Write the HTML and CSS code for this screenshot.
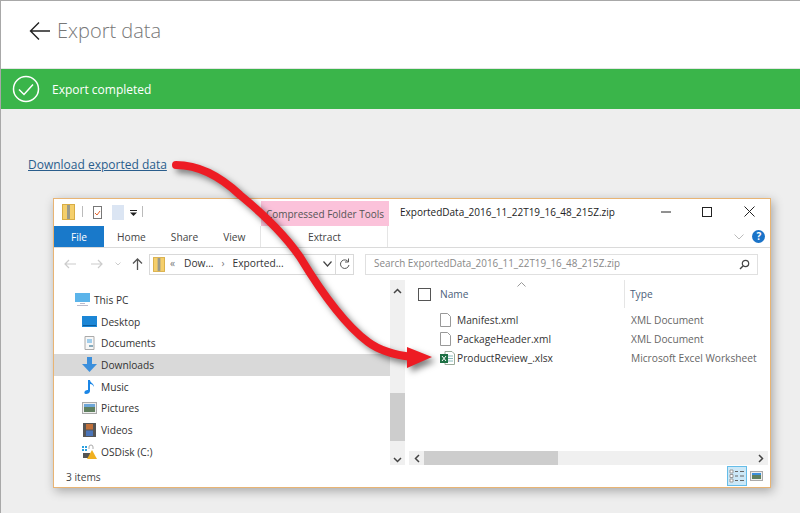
FILE: index.html
```html
<!DOCTYPE html>
<html lang="en">
<head>
<meta charset="utf-8">
<title>Export data</title>
<link rel="stylesheet" href="styles.css">
</head>
<body>
<div class="page">
  <header class="head">
    <svg class="back" width="22" height="20" viewBox="0 0 22 20"><path d="M21 10H2M10 1.500 1.500 10l8.500 8.500" fill="none" stroke="#222" stroke-width="1.400"/></svg>
    <h1 class="title">Export data</h1>
  </header>
  <div class="banner">
    <svg width="28" height="28" viewBox="0 0 28 28"><circle cx="14" cy="14" r="12.500" fill="none" stroke="#fff" stroke-width="1.500"/><path d="M7 14.500l5 5 9-10" fill="none" stroke="#fff" stroke-width="1.500"/></svg>
    <span class="banner-text">Export completed</span>
  </div>
  <main class="body">
    <a class="dl" href="#">Download exported data</a>
    <section class="win">
      <div class="titlebar">
        <div class="qat">
          <svg width="13" height="16" viewBox="0 0 13 16"><rect x=".5" y=".5" width="12" height="15" fill="#f5cf6b" stroke="#d8ad45"/><rect x="5" y="1" width="3" height="14" fill="#9a9a8a"/></svg>
          <i class="vsep"></i>
          <svg class="q2" width="9" height="14" viewBox="0 0 9 14"><rect x=".5" y="1.500" width="8" height="12" fill="#fff" stroke="#777"/><path d="M2 8l2 2 3-4" fill="none" stroke="#e2622b"/></svg>
          <svg class="q3" width="12" height="15" viewBox="0 0 12 15"><path d="M0 0h12v15H0z" fill="#dbe5f3"/></svg>
          <svg class="q4" width="7" height="6" viewBox="0 0 7 6"><path d="M0 0h7v1H0zM0 2.500h7L3.500 6z" fill="#222"/></svg>
          <i class="vsep s2"></i>
        </div>
        <div class="ctx">Compressed Folder Tools</div>
        <div class="wintitle">ExportedData_2016_11_22T19_16_48_215Z.zip</div>
        <div class="ctrls">
          <svg width="12" height="12" viewBox="0 0 12 12"><path d="M1 6h10" stroke="#222"/></svg>
          <svg class="max" width="10" height="10" viewBox="0 0 10 10"><rect x=".5" y=".5" width="9" height="9" fill="none" stroke="#222"/></svg>
          <svg class="close" width="11" height="11" viewBox="0 0 11 11"><path d="M.5.500l10 10M10.500.500l-10 10" stroke="#222"/></svg>
        </div>
      </div>
      <nav class="tabs">
        <span class="file">File</span>
        <span class="tab home">Home</span>
        <span class="tab share">Share</span>
        <span class="tab view">View</span>
        <span class="tab extract">Extract</span>
        <svg class="ribchev" width="10" height="6" viewBox="0 0 10 6"><path d="M.5.500 5 5 9.500.500" fill="none" stroke="#bbb"/></svg>
        <span class="help">?</span>
      </nav>
      <div class="addr">
        <svg class="nav n1" width="12" height="10" viewBox="0 0 12 10"><path d="M12 5H1M5 1 1 5l4 4" fill="none" stroke="#ccc" stroke-width="1.200"/></svg>
        <svg class="nav n2" width="12" height="10" viewBox="0 0 12 10"><path d="M0 5h11M7 1l4 4-4 4" fill="none" stroke="#ccc" stroke-width="1.200"/></svg>
        <svg class="nav n3" width="6" height="4" viewBox="0 0 6 4"><path d="M.5.500 3 3 5.500.500" fill="none" stroke="#ccc"/></svg>
        <svg class="nav n4" width="11" height="12" viewBox="0 0 11 12"><path d="M5.500 12V1M1 5.500 5.500 1 10 5.500" fill="none" stroke="#555" stroke-width="1.300"/></svg>
        <div class="pathbox">
          <svg class="zip" width="12" height="15" viewBox="0 0 13 16"><rect x=".5" y=".5" width="12" height="15" fill="#f5cf6b" stroke="#d8ad45"/><rect x="5" y="1" width="3" height="14" fill="#9a9a8a"/></svg>
          <span class="crumb c0">«</span><span class="crumb c2">Dow...</span><span class="crumb c1">›</span><span class="crumb c3">Exported...</span>
          <svg class="pdrop" width="9" height="6" viewBox="0 0 9 6"><path d="M.5.500 4.500 5 8.500.500" fill="none" stroke="#444" stroke-width="1.200"/></svg>
          <span class="refresh"><svg width="11" height="12" viewBox="0 0 11 12"><path d="M9.500 4A4.300 4.300 0 1 0 10 7M9.500 .5V4H6" fill="none" stroke="#555"/></svg></span>
        </div>
        <div class="searchbox">
          <span class="search-text">Search ExportedData_2016_11_22T19_16_48_215Z.zip</span>
          <svg width="11" height="11" viewBox="0 0 11 11"><circle cx="6.500" cy="4.500" r="3.200" fill="none" stroke="#444" stroke-width="1.200"/><path d="M4 7 1 10" stroke="#444" stroke-width="1.500"/></svg>
        </div>
      </div>
      <div class="content">
        <ul class="tree">
          <li class="node pc"><svg width="15" height="13" viewBox="0 0 15 13"><rect width="15" height="9" fill="#5bb4ea"/><path d="M5 10h5v1H5zM2 12h11v1H2z" fill="#bbc"/></svg>This PC</li>
          <li class="node"><svg width="15" height="11" viewBox="0 0 15 11"><rect width="15" height="11" fill="#1b86d6"/><rect x="1" y="9" width="13" height="1" fill="#0b5c9c"/></svg>Desktop</li>
          <li class="node"><svg width="15" height="14" viewBox="0 0 15 14"><path d="M3 .5h9v13H3z" fill="#f7f7f7" stroke="#aaa"/><path d="M5 4h5M5 6h5" stroke="#4aa3df"/><path d="M7 9h4v2H7z" fill="#8ab"/></svg>Documents</li>
          <li class="node on"><svg width="15" height="15" viewBox="0 0 15 15"><path d="M5 0h5v7h5l-7.500 8L0 7h5z" fill="#3b8fdc"/></svg>Downloads</li>
          <li class="node"><svg width="15" height="15" viewBox="0 0 15 15"><path d="M6 1h2c0 3 4 3 4 7-1-2-2-3-4-3v7c0 2-2 3-4 3s-2-2-1-3 2-1 3-1z" fill="#1b86e6"/></svg>Music</li>
          <li class="node"><svg width="15" height="12" viewBox="0 0 15 12"><rect x=".5" y=".5" width="14" height="11" fill="#eee" stroke="#aaa"/><rect x="2" y="2" width="11" height="3" fill="#6da6d8"/><rect x="2" y="5" width="11" height="5" fill="#5f7f5f"/></svg>Pictures</li>
          <li class="node"><svg width="15" height="14" viewBox="0 0 15 14"><rect x="1" width="13" height="14" fill="#555"/><rect x="4" y="1" width="7" height="5.500" fill="#c0703a"/><rect x="4" y="7.500" width="7" height="5.500" fill="#4a74b8"/></svg>Videos</li>
          <li class="node"><svg width="15" height="15" viewBox="0 0 15 15"><path d="M0 2h2v2H0zM3 2h2v2H3zM0 5h2v2H0zM3 5h2v2H3z" fill="#2aa0e0"/><path d="M7 5V3a2 2 0 0 1 4 0v2" fill="none" stroke="#aaa"/><path d="M1 9h7v5H1z" fill="#555"/><path d="M10 6l5 9H5z" fill="#f0b020"/></svg>OSDisk (C:)</li>
        </ul>
        <div class="vscroll">
          <svg width="9" height="6" viewBox="0 0 9 6"><path d="M1 5l3.500-3.500L8 5" fill="none" stroke="#444" stroke-width="1.500"/></svg>
          <i class="vthumb"></i>
          <svg class="vdown" width="9" height="6" viewBox="0 0 9 6"><path d="M1 1l3.500 3.500L8 1" fill="none" stroke="#444" stroke-width="1.500"/></svg>
        </div>
        <div class="pane">
          <svg class="caret" width="9" height="5" viewBox="0 0 9 5"><path d="M.5 4.500 4.500.500l4 4" fill="none" stroke="#999"/></svg>
          <div class="cols">
            <i class="check"></i>
            <span class="col-name">Name</span>
            <span class="col-type">Type</span>
          </div>
          <div class="row">
            <svg width="11" height="14" viewBox="0 0 11 14"><path d="M.5.500h7l3 3v10H.5z" fill="#fff" stroke="#999"/></svg>
            <span class="fname">Manifest.xml</span><span class="ftype">XML Document</span>
          </div>
          <div class="row">
            <svg width="11" height="14" viewBox="0 0 11 14"><path d="M.5.500h7l3 3v10H.5z" fill="#fff" stroke="#999"/></svg>
            <span class="fname">PackageHeader.xml</span><span class="ftype">XML Document</span>
          </div>
          <div class="row">
            <svg width="15" height="14" viewBox="0 0 15 14"><path d="M5 .5h7l2.500 2.500v10.500H5z" fill="#fff" stroke="#9a9"/><path d="M8 5h5M8 7.500h5M8 10h5" stroke="#8bb"/><rect y="3" width="8" height="9" fill="#1e7145"/><path d="M2 5l4 5M6 5l-4 5" stroke="#fff"/></svg>
            <span class="fname xl">ProductReview_.xlsx</span><span class="ftype">Microsoft Excel Worksheet</span>
          </div>
          <div class="hscroll">
            <svg class="hl" width="6" height="9" viewBox="0 0 6 9"><path d="M5 1 1.500 4.500 5 8" fill="none" stroke="#444" stroke-width="1.500"/></svg>
            <i class="hthumb"></i>
            <svg class="hr" width="6" height="9" viewBox="0 0 6 9"><path d="M1 1l3.500 3.500L1 8" fill="none" stroke="#444" stroke-width="1.500"/></svg>
          </div>
        </div>
      </div>
      <footer class="status">
        <span>3 items</span>
        <span class="views">
          <span class="vbtn"><svg width="16" height="14" viewBox="0 0 16 14"><path d="M1 1h3v3H1zM1 5.500h3v3H1zM1 10h3v3H1z" fill="#fff" stroke="#999"/><path d="M6 2.500h3M11 2.500h4M6 7h3M11 7h4M6 11.500h3M11 11.500h4" stroke="#666"/></svg></span>
          <svg class="vbtn2" width="13" height="10" viewBox="0 0 13 10"><rect x=".5" y=".5" width="12" height="9" fill="#eee" stroke="#aaa"/><rect x="2" y="2" width="9" height="2" fill="#3b8fdc"/><rect x="2" y="4" width="9" height="4" fill="#5f7f5f"/></svg>
        </span>
      </footer>
    </section>
  </main>
  <svg class="arrow" width="800" height="513" viewBox="0 0 800 513">
    <path d="M176 165C200 165 222 178 240 195 262 213 285 235 300 257 323 295 345 325 368 342 380 351 395 355 412 357" fill="none" stroke="#ed1c24" stroke-width="8" stroke-linecap="round"/>
    <path d="M407 347 432 357 407 368z" fill="#ed1c24"/>
  </svg>
</div>
</body>
</html>
```
FILE: styles.css
```css
* { box-sizing: border-box; }
html, body { margin: 0; padding: 0; }
body { width: 800px; height: 513px; overflow: hidden; font-family: "Open Sans", "Noto Sans", sans-serif; }
.page { position: relative; width: 800px; height: 513px; background: #eee; border-top: 1px solid #a8a8a8; border-left: 1px solid #a8a8a8; overflow: hidden; }
.head { height: 68px; background: #fff; display: flex; align-items: center; padding: 0 0 8px 28px; border-bottom: 1px solid #e4e4e4; }
.back { margin-right: 6px; margin-top: 1px; }
.title { margin: 0; font-size: 20px; font-weight: 300; color: #777; }
.banner { height: 40px; background: #3ab54a; display: flex; align-items: center; padding-left: 11px; color: #fff; }
.banner-text { margin: 1px 0 0 12px; font-size: 12px; }
.body { height: 404px; padding: 47px 0 0 27px; display: flex; flex-direction: column; }
.dl { font-size: 12px; line-height: 17px; color: #2a5d8c; text-decoration: underline; align-self: flex-start; }
.win { margin: 25px 0 0 25px; width: 718px; height: 290px; background: #fff; border: 1px solid #e8b474; box-shadow: 2px 3px 10px rgba(0,0,0,.3); font-size: 10.200px; color: #333; display: flex; flex-direction: column; }
.titlebar { height: 27px; display: flex; flex: none; }
.qat { width: 207px; padding: 5px 0 0 8px; display: flex; align-items: flex-start; }
.vsep { width: 1px; height: 11px; background: #bbb; margin: 2px 0 0 7px; }
.q2 { margin: 1px 0 0 10px; }
.q3 { margin: 1px 0 0 10px; }
.q4 { margin: 6px 0 0 6px; }
.s2 { margin-left: 5px; }
.ctx { width: 128px; margin-top: 2px; height: 25px; background: #fbc2da; color: #555; text-align: center; line-height: 26px; font-size: 10px; white-space: nowrap; }
.wintitle { margin-left: 11px; line-height: 27px; font-size: 10px; color: #222; white-space: nowrap; width: 262px; }
.ctrls { display: flex; align-items: center; padding-bottom: 2px; }
.ctrls svg:first-child { margin-left: -2px; }
.max { margin-left: 30px; }
.close { margin-left: 32px; }
.tabs { height: 22px; flex: none; display: flex; align-items: center; border-bottom: 1px solid #dadada; white-space: nowrap; }
.file { flex: none; width: 50px; height: 21px; background: #1979ca; color: #fff; text-align: center; line-height: 22px; }
.tab { flex: none; line-height: 22px; color: #444; }
.home { margin-left: 13px; }
.share { margin-left: 25px; }
.view { margin-left: 25px; }
.extract { width: 128px; height: 21px; margin-left: 15px; text-align: center; border-left: 1px solid #e5e5e5; border-right: 1px solid #e5e5e5; }
.ribchev { flex: none; margin-left: 346px; }
.help { flex: none; width: 13px; height: 13px; margin-left: 8px; border-radius: 50%; background: #1a73c8; color: #fff; font-weight: 700; font-size: 10px; line-height: 13px; text-align: center; }
.addr { height: 32px; flex: none; display: flex; align-items: center; padding-left: 10px; }
.nav { flex: none; }
.n1 { margin-left: 0; }
.n2 { margin-left: 15px; }
.n3 { margin-left: 12px; }
.n4 { margin-left: 11px; }
.pathbox { margin-left: 6px; width: 205px; height: 21px; border: 1px solid #d9d9d9; display: flex; align-items: center; white-space: nowrap; color: #333; }
.zip { margin-left: 3px; flex: none; }
.crumb { font-size: 10.200px; margin-top: -3px; }
.c0 { margin-left: 5px; color: #777; }
.c2 { margin-left: 9px; }
.c1 { color: #777; margin: -3px 8px 0 8px; }
.pdrop { margin-left: auto; margin-right: 3px; flex: none; }
.refresh { width: 18px; height: 19px; border-left: 1px solid #d9d9d9; display: flex; align-items: center; justify-content: center; flex: none; }
.searchbox { margin-left: 11px; width: 393px; height: 21px; border: 1px solid #e0e0e0; padding: 0 7px 0 8px; display: flex; align-items: center; justify-content: space-between; color: #888; font-size: 9.900px; white-space: nowrap; }
.search-text { margin-top: -2px; }
.content { height: 185px; flex: none; display: flex; }
.tree { width: 336px; margin: 0; padding: 9px 0 0; list-style: none; flex: none; }
.node { height: 21.700px; display: flex; align-items: center; gap: 4px; padding-left: 28px; white-space: nowrap; color: #333; }
.node svg { flex: none; }
.pc { padding-left: 21px; }
.on { background: #d9d9d9; }
.vscroll { width: 15px; flex: none; background: #f0f0f0; display: flex; flex-direction: column; align-items: center; padding-top: 8px; }
.vthumb { display: block; width: 15px; height: 48px; margin-top: 99px; background: #cdcdcd; }
.vdown { margin-top: auto; margin-bottom: 2px; }
.pane { flex: 1; min-width: 0; display: flex; flex-direction: column; position: relative; }
.caret { position: absolute; left: 112px; top: 2px; }
.cols { height: 30px; flex: none; display: flex; align-items: center; padding: 0 0 2px 13px; color: #4c607a; }
.check { width: 13px; height: 13px; border: 1px solid #555; flex: none; }
.col-name { margin-left: 9px; width: 185px; height: 28px; line-height: 28px; border-right: 1px solid #e5e5e5; }
.col-type { margin-left: 5px; }
.row { height: 19px; flex: none; display: flex; align-items: center; padding-left: 35px; white-space: nowrap; color: #333; }
.row svg { flex: none; }
.fname { margin-left: 6px; width: 174px; }
.row svg + .xl { margin-left: 2px; }
.ftype { color: #666; }
.hscroll { height: 14px; margin: auto 2px 0 4px; background: #f0f0f0; display: flex; align-items: center; flex: none; }
.hl { margin-left: 5px; }
.hthumb { display: block; width: 134px; height: 14px; margin-left: 4px; background: #cdcdcd; }
.hr { margin-left: auto; margin-right: 4px; }
.status { flex: 1; display: flex; align-items: center; justify-content: space-between; padding: 2px 0 0 12px; color: #444; }
.views { display: flex; align-items: center; padding-right: 7px; margin-top: -2px; }
.vbtn { width: 20px; height: 20px; background: #cce8f7; border: 1px solid #66bde8; display: flex; align-items: center; justify-content: center; }
.vbtn2 { margin-left: 3px; }
.arrow { position: absolute; left: -1px; top: -1px; pointer-events: none; filter: drop-shadow(4px 4px 3px rgba(0,0,0,.5)); }
```
